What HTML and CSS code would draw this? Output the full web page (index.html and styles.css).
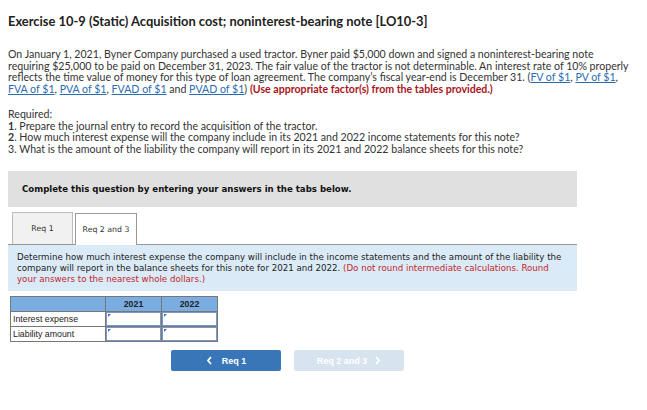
FILE: index.html
```html
<!DOCTYPE html>
<html>
<head>
<meta charset="utf-8">
<link rel="stylesheet" href="styles.css">
</head>
<body>
<div class="page">
  <h1 class="title">Exercise 10-9 (Static) Acquisition cost; noninterest-bearing note [LO10-3]</h1>
  <p class="intro">On January 1, 2021, Byner Company purchased a used tractor. Byner paid $5,000 down and signed a noninterest-bearing note<br>requiring $25,000 to be paid on December 31, 2023. The fair value of the tractor is not determinable. An interest rate of 10% properly<br>reflects the time value of money for this type of loan agreement. The company’s fiscal year-end is December 31. (<a href="#">FV of $1</a>, <a href="#">PV of $1</a>,<br><a href="#">FVA of $1</a>, <a href="#">PVA of $1</a>, <a href="#">FVAD of $1</a> and <a href="#">PVAD of $1</a>) <span class="warn">(Use appropriate factor(s) from the tables provided.)</span></p>
  <div class="required">
    <div>Required:</div>
    <div><b>1</b>. Prepare the journal entry to record the acquisition of the tractor.</div>
    <div><b>2</b>. How much interest expense will the company include in its 2021 and 2022 income statements for this note?</div>
    <div>3. What is the amount of the liability the company will report in its 2021 and 2022 balance sheets for this note?</div>
  </div>
  <div class="complete">Complete this question by entering your answers in the tabs below.</div>
  <div class="tabs">
    <div class="tab">Req 1</div>
    <div class="tab active">Req 2 and 3</div>
  </div>
  <div class="info">Determine how much interest expense the company will include in the income statements and the amount of the liability the<br>company will report in the balance sheets for this note for 2021 and 2022. <span class="red">(Do not round intermediate calculations. Round<br>your answers to the nearest whole dollars.)</span></div>
  <table class="grid">
    <tr class="head"><th class="c0"></th><th class="c1">2021</th><th class="c2">2022</th></tr>
    <tr><td class="label">Interest expense</td><td class="cell"><span class="mark"></span></td><td class="cell"><span class="mark"></span></td></tr>
    <tr><td class="label">Liability amount</td><td class="cell"><span class="mark"></span></td><td class="cell"><span class="mark"></span></td></tr>
  </table>
  <div class="nav">
    <div class="btn prev"><svg width="7" height="9" viewBox="0 0 7 9"><path d="M5 1 L2 4.5 L5 8" fill="none" stroke="#fff" stroke-width="1.8"/></svg><span>Req 1</span></div>
    <div class="btn next"><span>Req 2 and 3</span><svg width="7" height="9" viewBox="0 0 7 9"><path d="M2 1 L5 4.5 L2 8" fill="none" stroke="#fff" stroke-width="1.8"/></svg></div>
  </div>
</div>
</body>
</html>
```
FILE: styles.css
```css
html, body { margin: 0; padding: 0; background: #fff; }
.page { padding: 13px 8px 0 8px; font-family: "Lato", "Liberation Sans", sans-serif; color: #333; }
.title { margin: 0; font-size: 12.9px; font-weight: bold; color: #222; line-height: 16px; }
.intro { margin: 20px 0 0 0; font-size: 10.6px; line-height: 11.7px; white-space: nowrap; }
.intro a { color: #2b6cb0; text-decoration: underline; }
.warn { color: #a8141c; font-weight: bold; }
.required { margin-top: 13px; font-size: 10.6px; line-height: 11.8px; white-space: nowrap; }
.required b { font-weight: bold; }
.complete { margin-top: 15px; width: 569px; height: 36px; background: #e0e0e0; box-sizing: border-box; padding-left: 14px; display: flex; align-items: center; font-family: "DejaVu Sans", Verdana, sans-serif; font-weight: bold; font-size: 8.6px; color: #111; }
.tabs { display: flex; gap: 2px; margin-top: 5px; margin-left: 4px; height: 32px; align-items: flex-end; }
.tab { box-sizing: border-box; width: 61px; height: 32px; border: 1px solid #bbb; border-bottom: none; background: #f1f1f1; font-family: "DejaVu Sans", Verdana, sans-serif; font-size: 7.8px; color: #333; display: flex; align-items: center; justify-content: center; }
.tab.active { background: #fff; border-color: #999; width: 62px; height: 32px; position: relative; top: 1px; }
.info { width: 569px; box-sizing: border-box; background: #dbeaf7; border-top: 1px solid #999; padding: 7px 9px 5px 9px; font-family: "DejaVu Sans", Verdana, sans-serif; font-size: 8.66px; line-height: 11px; color: #222; white-space: nowrap; height: 47px; }
.red { color: #c2272d; }
.grid { margin: 5px 0 0 2px; border-collapse: collapse; font-family: "Liberation Sans", Arial, sans-serif; font-size: 8.8px; }
.grid th, .grid td { border: 1px solid #777; padding: 0; height: 14px; }
.grid .head th { background: #7aaee3; font-weight: bold; color: #222; text-align: center; height: 14px; }
.c0 { width: 94px; }
.c1, .c2 { width: 55px; }
.label { padding-left: 2px !important; color: #222; text-align: left; }
.cell { position: relative; background: #fff; box-shadow: inset 0 0 0 1px #7d97c6; }
.mark { position: absolute; left: 2px; top: 2px; width: 0; height: 0; border-left: 3px solid #3a6fc0; border-bottom: 3px solid transparent; }
.nav { display: flex; gap: 13px; margin: 8px 0 0 163px; }
.btn { box-sizing: border-box; width: 110px; height: 21px; border-radius: 2px; display: flex; align-items: center; justify-content: center; gap: 9px; font-family: "Liberation Sans", Arial, sans-serif; font-weight: bold; font-size: 9px; color: #fff; }
.prev { background: #3876b8; }
.next { background: #d8e3f0; gap: 7px; }
```
